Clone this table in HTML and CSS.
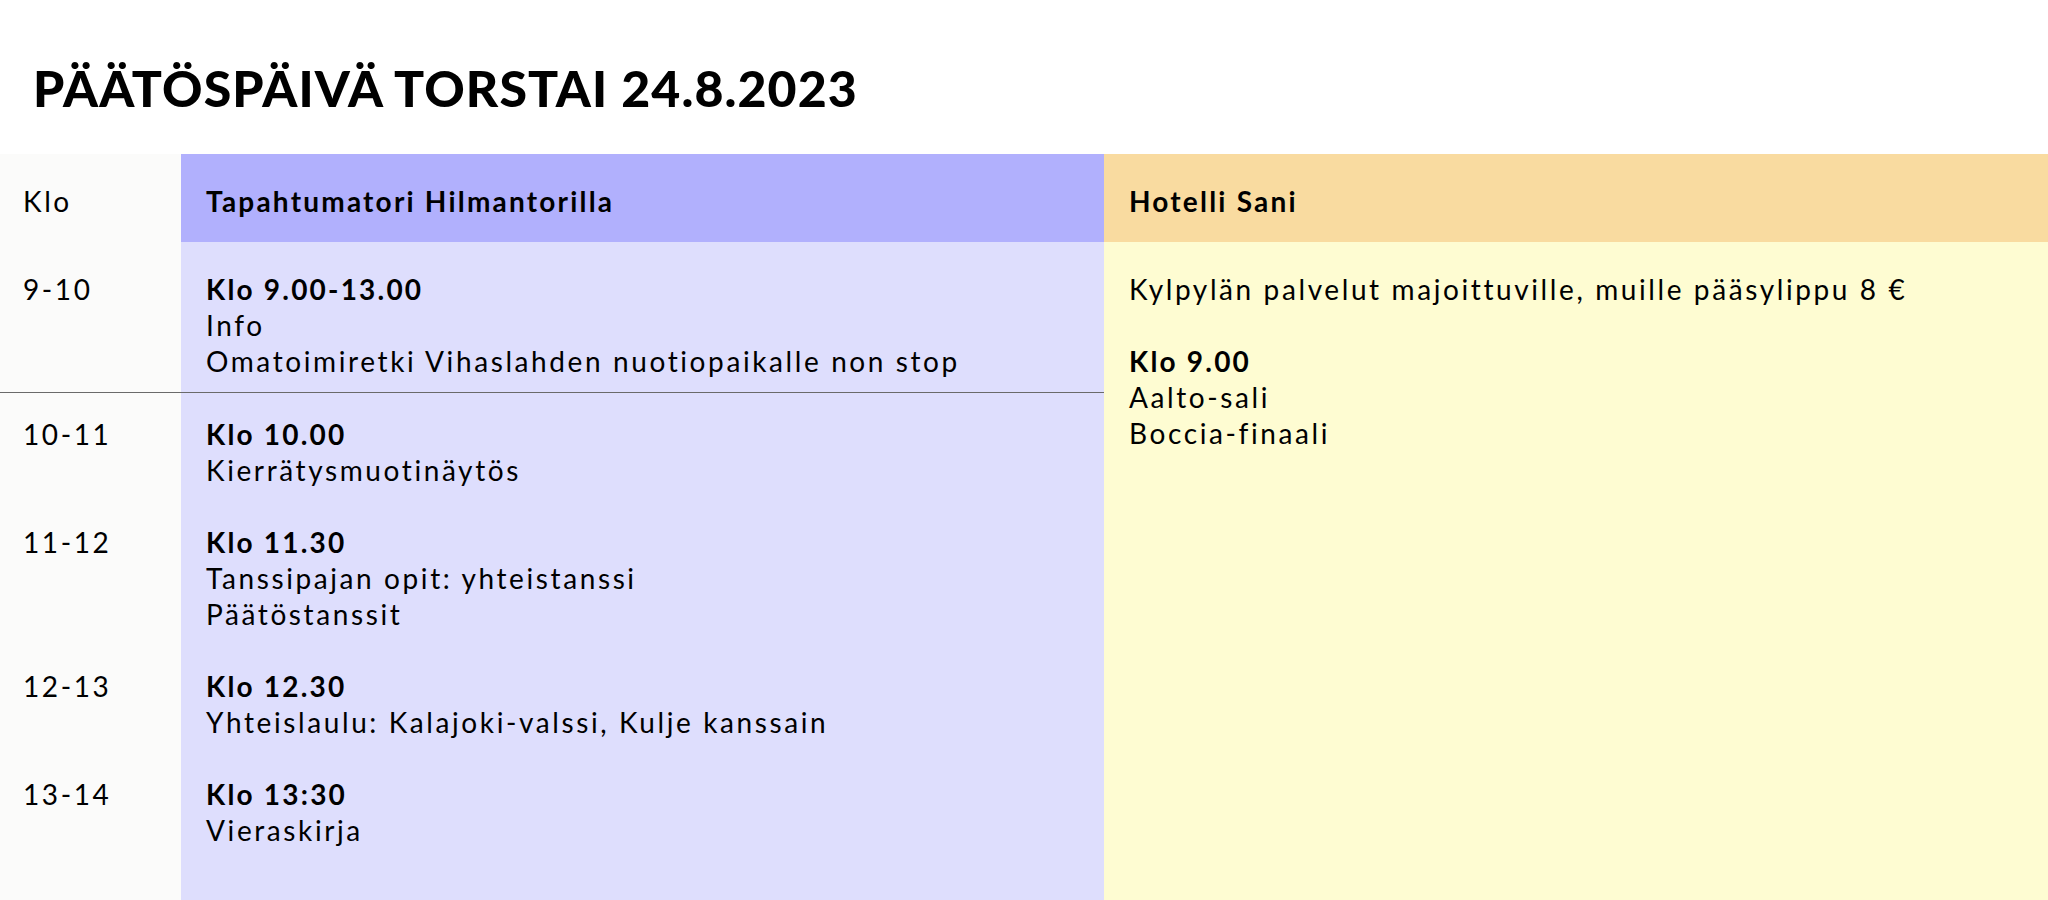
FILE: index.html
```html
<!DOCTYPE html>
<html lang="fi">
<head>
<meta charset="utf-8">
<title>Päätöspäivä torstai 24.8.2023</title>
<link rel="stylesheet" href="styles.css">
</head>
<body>
<header class="page-head">
  <h1 class="title">PÄÄTÖSPÄIVÄ TORSTAI 24.8.2023</h1>
</header>
<main class="schedule">
  <div class="cell head time">Klo</div>
  <div class="cell head purple-head"><strong>Tapahtumatori Hilmantorilla</strong></div>
  <div class="cell head orange-head"><strong>Hotelli Sani</strong></div>

  <div class="cell time first sep">9-10</div>
  <div class="cell purple first sep"><strong>Klo 9.00-13.00</strong><br>Info<br>Omatoimiretki Vihaslahden nuotiopaikalle non stop</div>
  <div class="cell yellow first span">Kylpylän palvelut majoittuville, muille pääsylippu 8 €<br><br><strong>Klo 9.00</strong><br>Aalto-sali<br>Boccia-finaali</div>

  <div class="cell time">10-11</div>
  <div class="cell purple"><strong>Klo 10.00</strong><br>Kierrätysmuotinäytös</div>

  <div class="cell time">11-12</div>
  <div class="cell purple"><strong>Klo 11.30</strong><br>Tanssipajan opit: yhteistanssi<br>Päätöstanssit</div>

  <div class="cell time">12-13</div>
  <div class="cell purple"><strong>Klo 12.30</strong><br>Yhteislaulu: Kalajoki-valssi, Kulje kanssain</div>

  <div class="cell time">13-14</div>
  <div class="cell purple"><strong>Klo 13:30</strong><br>Vieraskirja</div>
</main>
</body>
</html>
```

FILE: styles.css
```css
* { box-sizing: border-box; }

html, body {
  margin: 0;
  padding: 0;
  background: #ffffff;
  color: #000000;
}

body {
  font-family: Lato, "Open Sans", sans-serif;
}

.page-head {
  height: 154px;
  padding: 58px 33px 0;
}

.title {
  margin: 0;
  font-family: Lato, sans-serif;
  font-weight: 900;
  font-size: 50px;
  line-height: 60px;
  letter-spacing: 1.1px;
}

.schedule {
  display: grid;
  grid-template-columns: 181px 923px 1fr;
  grid-template-rows: 88px auto auto auto auto 1fr;
  min-height: 746px;
  font-size: 28px;
  line-height: 36px;
  letter-spacing: 2.6px;
}

.cell {
  padding: 23px 24px 13px 25px;
}

.cell strong {
  font-weight: 700;
  letter-spacing: 2.2px;
}

.head {
  padding: 29px 24px 23px 25px;
}

.time {
  background: #fbfbfa;
  padding-left: 23px;
}

.purple-head { background: #b1b0fd; }
.orange-head { background: #f9dba0; }
.purple { background: #dedefd; }
.yellow { background: #fefcd2; }

.first { padding-top: 29px; }

.sep {
  border-bottom: 1px solid #6a6a6a;
}

.span {
  grid-column: 3;
  grid-row: 2 / span 5;
}
```
